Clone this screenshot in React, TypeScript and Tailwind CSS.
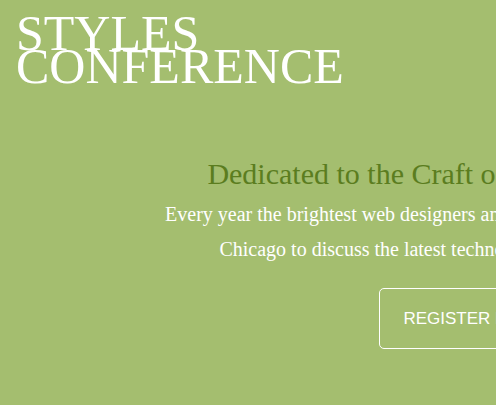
import React from "react";

export default function App() {
  return (
    <div className="min-h-[405px] w-full overflow-hidden bg-[#a4be6f] font-['Liberation_Serif',serif]">
      {/* Header */}
      <header className="px-4 pt-[17px]">
        <h1 className="text-[50px] leading-[33px] text-white uppercase">
          Styles
          <br />
          Conference
        </h1>
      </header>

      {/* Hero */}
      <section className="mt-[73px] w-[940px] text-center">
        <h2 className="text-[30px] leading-[36px] text-[#5b7d1f]">
          Dedicated to the Craft of Building Websites
        </h2>
        <p className="mx-auto mt-[5px] max-w-[640px] text-[20px] leading-[35px] text-white">
          Every year the brightest web designers and front-end developers descend on
          Chicago to discuss the latest technologies. Join us this August!
        </p>
        <a
          href="#"
          className="mt-[21px] inline-block rounded-[5px] border border-white px-[23px] py-[20px] font-['Liberation_Sans',Arial,sans-serif] text-[17px] leading-[19px] text-white uppercase"
        >
          Register Now
        </a>
      </section>
    </div>
  );
}
